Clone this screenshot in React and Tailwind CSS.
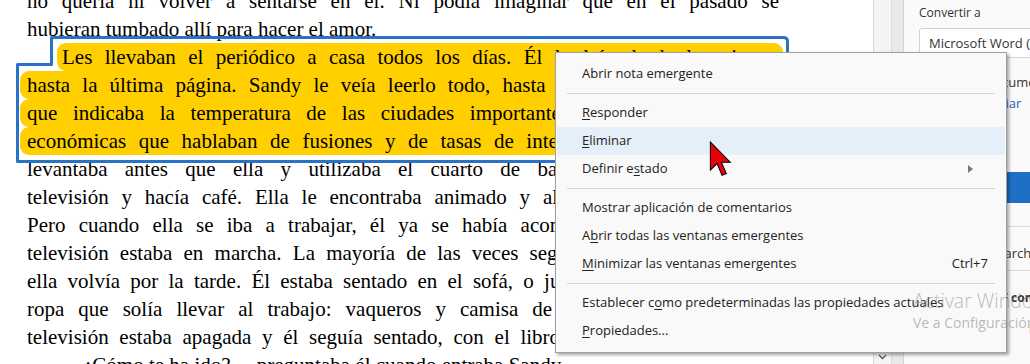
import React from "react";

const lines = [
  { t: "no quería ni volver a sentarse en él. Ni podía imaginar que en el pasado se" },
  { t: "hubieran tumbado allí para hacer el amor.", last: true },
  { t: "Les llevaban el periódico a casa todos los días. Él lo leía desde la primera", hl: "first" },
  { t: "hasta la última página. Sandy le veía leerlo todo, hasta la sección del tiempo y", hl: "mid" },
  { t: "que indicaba la temperatura de las ciudades importantes, y hasta las noticias", hl: "mid" },
  { t: "económicas que hablaban de fusiones y de tasas de interés. Cada mañana él se", hl: "mid" },
  { t: "levantaba antes que ella y utilizaba el cuarto de baño. Luego encendía la" },
  { t: "televisión y hacía café. Ella le encontraba animado y alegre todas las mañanas." },
  { t: "Pero cuando ella se iba a trabajar, él ya se había acomodado en el sofá y la" },
  { t: "televisión estaba en marcha. La mayoría de las veces seguía allí, sentado, cuando" },
  { t: "ella volvía por la tarde. Él estaba sentado en el sofá, o junto a la ventana, con la" },
  { t: "ropa que solía llevar al trabajo: vaqueros y camisa de franela. Otras veces la" },
  { t: "televisión estaba apagada y él seguía sentado, con el libro de la biblioteca abierto" },
  { t: "—¿Cómo te ha ido? —preguntaba él cuando entraba Sandy.", last: true, indent: true },
];

const DocLine = ({ line }) => {
  if (line.hl === "first") {
    return (
      <div className="h-[28px] ml-[30px] -mr-[4px] pl-[5px] pr-[4px] bg-[#ffcf00] rounded-[9px] text-justify [text-align-last:justify]">
        {line.t}
      </div>
    );
  }
  if (line.hl === "mid") {
    return (
      <div className="h-[28px] -ml-[7px] -mr-[4px] pl-[7px] pr-[4px] bg-[#ffcf00] rounded-[9px] text-justify [text-align-last:justify]">
        {line.t}
      </div>
    );
  }
  if (line.last) {
    return <div className={`h-[28px] ${line.indent ? "pl-[35px]" : ""}`}>{line.t}</div>;
  }
  return <div className="h-[28px] text-justify [text-align-last:justify]">{line.t}</div>;
};

const U = ({ children }) => <span className="underline underline-offset-[2px]">{children}</span>;

const Item = ({ children, right, arrow, active }) => (
  <div className={`mx-px h-[28px] flex items-center pl-[25px] pr-[17px] ${active ? "bg-[#e5eff9]" : ""}`}>
    <span className="flex-1 whitespace-nowrap">{children}</span>
    {right && <span>{right}</span>}
    {arrow && (
      <svg width="5" height="8" viewBox="0 0 5 8" className="mr-[15px]">
        <path d="M0 0 L5 4 L0 8 Z" fill="#7a7a7a" />
      </svg>
    )}
  </div>
);

const Sep = () => (
  <div className="h-[11px] mx-[11px] flex items-center">
    <div className="h-px w-full bg-[#d4d4d4]" />
  </div>
);

export default function App() {
  return (
    <div className="relative flex w-[1030px] h-[364px] overflow-hidden bg-white">
      {/* Document */}
      <div className="relative w-[873px] shrink-0 overflow-hidden bg-white">
        <div className="-mt-[13px] pl-[27px] w-[779px] font-['Liberation_Serif',serif] text-[21px] leading-[28px] text-black">
          {lines.map((l, i) => (
            <DocLine key={i} line={l} />
          ))}
        </div>
        <svg className="absolute left-0 top-0" width="873" height="200">
          <path
            d="M51.5 37.5 H783.5 Q787.5 37.5 787.5 41.5 V161.5 H17.5 V64.5 H51.5 Z"
            fill="none"
            stroke="#2b72c6"
            strokeWidth="3"
            strokeLinejoin="round"
          />
        </svg>
      </div>

      {/* Scrollbar */}
      <div className="w-[18px] shrink-0 border-l border-[#d4d4d4] bg-[#f4f4f4] flex flex-col justify-end items-center pb-[4px]">
        <svg width="9" height="6" viewBox="0 0 9 6">
          <path d="M1 1 L4.5 4.5 L8 1" fill="none" stroke="#555" strokeWidth="1.3" />
        </svg>
      </div>
      <div className="w-[12px] shrink-0 border-l border-[#dadada] bg-[#e9e9e9]" />

      {/* Right panel */}
      <div className="flex-1 border-l border-[#d4d4d4] bg-[#fafafa] pl-[15px] pt-[4px] font-['Open_Sans',sans-serif] text-[#333] overflow-hidden">
        <div className="h-[18px] text-[12px] leading-[18px] whitespace-nowrap">Convertir a</div>
        <div className="mt-[6px] h-[30px] w-[200px] rounded-[3px] border border-[#d2d2d2] bg-white pl-[9px] text-[13px] leading-[28px] whitespace-nowrap">
          Microsoft Word (*.docx)
        </div>
        <div className="mt-[15px] h-[18px] text-[13px] leading-[18px] whitespace-nowrap">Idioma del documento:</div>
        <div className="mt-[3px] h-[18px] text-[13px] leading-[18px] whitespace-nowrap">
          Español <span className="text-[#1a64b8]">Cambiar</span>
        </div>
        <div className="mt-[60px] h-[31px] w-[200px] rounded-[3px] bg-[#1f6fc6] text-white text-[13px] leading-[31px] pl-[20px]">
          Convertir
        </div>
        <div className="mt-[23px] h-px w-[200px] bg-[#dcdcdc]" />
        <div className="mt-[17px] h-[18px] pl-[13px] text-[13px] leading-[18px] whitespace-nowrap">Seleccionar archivo</div>
        <div className="mt-[8px] h-px w-[200px] bg-[#dcdcdc]" />
        <div className="mt-[18px] h-[18px] pl-[27px] text-[12px] leading-[18px] font-bold whitespace-nowrap">Editar PDF con Acrobat</div>
        <div className="mt-[14px] h-[18px] text-[12px] leading-[18px] whitespace-nowrap">
          Prueba gratuita<span className="ml-[23px]">las 24 horas</span>
        </div>
      </div>

      {/* Context menu */}
      <div className="absolute left-[555px] top-[52px] w-[452px] h-[301px] border border-[#a0a0a0] bg-[#f9f9f9] pt-[7px] shadow-[2px_2px_3px_rgba(0,0,0,0.35)] font-['Open_Sans',sans-serif] text-[13px] text-[#222]">
        <Item>Abrir nota emergente</Item>
        <Sep />
        <Item>
          <U>R</U>esponder
        </Item>
        <Item active>
          <U>E</U>liminar
        </Item>
        <Item arrow>
          Definir e<U>s</U>tado
        </Item>
        <Sep />
        <Item>Mostrar aplicación de comentarios</Item>
        <Item>
          A<U>b</U>rir todas las ventanas emergentes
        </Item>
        <Item right="Ctrl+7">
          <U>M</U>inimizar las ventanas emergentes
        </Item>
        <Sep />
        <Item>
          Establecer c<U>o</U>mo predeterminadas las propiedades actuales
        </Item>
        <Item>
          <U>P</U>ropiedades...
        </Item>
      </div>

      {/* Mouse cursor */}
      <svg className="absolute left-[709px] top-[141px]" width="23" height="36" viewBox="0 0 13 21">
        <polygon
          points="0.6,0.6 0.6,17 4.5,13.2 7.4,20 9.9,18.9 7,12.4 12.2,12.4"
          fill="#e8000b"
          stroke="#000"
          strokeWidth="0.6"
          strokeLinejoin="miter"
        />
      </svg>

      {/* Watermark */}
      <div className="absolute left-[913px] top-[288px] font-['Open_Sans',sans-serif] text-[rgba(130,130,130,0.55)] whitespace-nowrap pointer-events-none">
        <div className="text-[19.5px] leading-[25px] font-light">Activar Windows</div>
        <div className="text-[14px] leading-[20px]">Ve a Configuración para activar Windows.</div>
      </div>
    </div>
  );
}
